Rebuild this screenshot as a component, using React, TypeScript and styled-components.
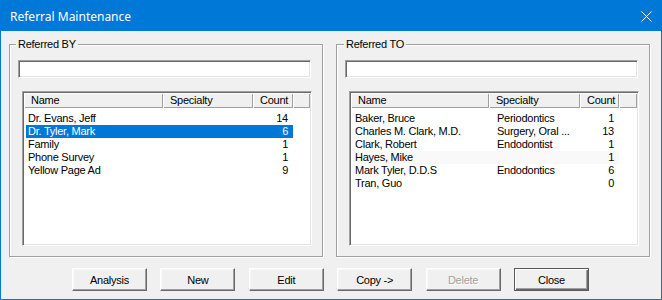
import React from "react";
import styled, { createGlobalStyle, css } from "styled-components";

const GlobalStyle = createGlobalStyle`
  html, body {
    margin: 0;
    padding: 0;
    background: #f0f0f0;
  }
  body {
    font-family: "Liberation Sans", Arial, sans-serif;
    font-size: 11px;
    letter-spacing: -0.25px;
    color: #000;
  }
`;

const Window = styled.div`
  width: 662px;
  height: 300px;
  box-sizing: border-box;
  border: 1px solid #0078d7;
  background: #f0f0f0;
  display: flex;
  flex-direction: column;
  overflow: hidden;
`;

const TitleBar = styled.div`
  height: 30px;
  flex: none;
  background: #0078d7;
  display: flex;
  align-items: center;
  padding: 0 9px;
`;

const Title = styled.span`
  font-family: "Noto Sans", "Liberation Sans", sans-serif;
  font-size: 12px;
  letter-spacing: 0;
  color: #fff;
`;

const CloseGlyph = styled.svg`
  margin-left: auto;
  display: block;
`;

const Client = styled.div`
  display: grid;
  grid-template-columns: 314px 314px;
  column-gap: 13px;
  padding: 13px 0 0 8px;
`;

const GroupBox = styled.div`
  position: relative;
  border: 1px solid #a0a0a0;
  box-shadow: inset 1px 1px 0 #fff, 1px 1px 0 #fff;
  padding: 15px 10px 10px 10px;
  display: flex;
  flex-direction: column;
`;

const GroupCaption = styled.span<{ $left: number }>`
  position: absolute;
  top: -7px;
  left: ${(p) => p.$left}px;
  padding: 0 2px;
  background: #f0f0f0;
  line-height: 13px;
`;

const sunken = css`
  border-style: solid;
  border-width: 1px;
  border-color: #a0a0a0 #fff #fff #a0a0a0;
  box-shadow: inset 1px 1px 0 #696969, inset -1px -1px 0 #e3e3e3;
`;

const TextBox = styled.div`
  ${sunken};
  height: 18px;
  box-sizing: border-box;
  background: #fff;
  margin: 0 1px 0 -2px;
`;

const ListView = styled.div`
  ${sunken};
  height: 155px;
  box-sizing: border-box;
  margin: 13px 0 0 2px;
  padding: 1px;
  background: #fff;
  display: flex;
  flex-direction: column;
`;

const HeaderRow = styled.div`
  display: flex;
  height: 15px;
  flex: none;
`;

const HeaderCell = styled.div<{ $w?: number }>`
  ${(p) => (p.$w ? `width: ${p.$w}px; flex: none;` : "flex: 1;")}
  box-sizing: border-box;
  background: #f0f0f0;
  box-shadow: inset 1px 1px 0 #fff, inset -1px -1px 0 #a0a0a0;
  padding: 0 7px;
  line-height: 15px;
  white-space: nowrap;
  overflow: hidden;
`;

const Rows = styled.div`
  padding: 4px 0 0 2px;
`;

const Row = styled.div<{ $selected?: boolean; $hot?: boolean }>`
  display: flex;
  height: 13px;
  line-height: 13px;
  width: fit-content;
  background: ${(p) => (p.$selected ? "#0078d7" : p.$hot ? "#f9f9f9" : "transparent")};
  color: ${(p) => (p.$selected ? "#fff" : "#000")};
`;

const Cell = styled.div<{ $w: number; $align?: "left" | "right"; $pad: string }>`
  width: ${(p) => p.$w}px;
  flex: none;
  box-sizing: border-box;
  padding: ${(p) => p.$pad};
  text-align: ${(p) => p.$align ?? "left"};
  white-space: nowrap;
  overflow: hidden;
`;

const ButtonBar = styled.div`
  width: 517px;
  margin: 11px 0 0 71px;
  display: flex;
  justify-content: space-between;
`;

const Button = styled.button<{ $default?: boolean }>`
  width: 75px;
  height: 23px;
  box-sizing: border-box;
  padding: 0;
  font-family: "Liberation Sans", Arial, sans-serif;
  font-size: 11px;
  letter-spacing: -0.25px;
  color: #000;
  background: #f0f0f0;
  border-style: solid;
  border-width: 1px;
  border-color: #fff #696969 #696969 #fff;
  box-shadow: inset -1px -1px 0 #a0a0a0, inset 1px 1px 0 #f8f8f8;
  ${(p) =>
    p.$default &&
    css`
      border-color: #5a5a5a;
      box-shadow: inset 1px 1px 0 #fff, inset -1px -1px 0 #696969, inset -2px -2px 0 #a0a0a0;
    `}
  &:disabled {
    color: #a0a0a0;
    text-shadow: 1px 1px 0 #fff;
  }
`;

type Item = { name: string; specialty: string; count: string; selected?: boolean; hot?: boolean };

const referredBy: Item[] = [
  { name: "Dr. Evans, Jeff", specialty: "", count: "14" },
  { name: "Dr. Tyler, Mark", specialty: "", count: "6", selected: true },
  { name: "Family", specialty: "", count: "1" },
  { name: "Phone Survey", specialty: "", count: "1" },
  { name: "Yellow Page Ad", specialty: "", count: "9" },
];

const referredTo: Item[] = [
  { name: "Baker, Bruce", specialty: "Periodontics", count: "1" },
  { name: "Charles M. Clark, M.D.", specialty: "Surgery, Oral ...", count: "13" },
  { name: "Clark, Robert", specialty: "Endodontist", count: "1" },
  { name: "Hayes, Mike", specialty: "", count: "1", hot: true },
  { name: "Mark Tyler, D.D.S", specialty: "Endodontics", count: "6" },
  { name: "Tran, Guo", specialty: "", count: "0" },
];

function Group({
  caption,
  captionLeft,
  cols,
  items,
}: {
  caption: string;
  captionLeft: number;
  cols: [number, number, number];
  items: Item[];
}) {
  return (
    <GroupBox>
      <GroupCaption $left={captionLeft}>{caption}</GroupCaption>
      <TextBox />
      <ListView>
        <HeaderRow>
          <HeaderCell $w={cols[0]}>Name</HeaderCell>
          <HeaderCell $w={cols[1]}>Specialty</HeaderCell>
          <HeaderCell $w={cols[2]}>Count</HeaderCell>
          <HeaderCell />
        </HeaderRow>
        <Rows>
          {items.map((it) => (
            <Row key={it.name} $selected={it.selected} $hot={it.hot}>
              <Cell $w={cols[0] - 2} $pad="0 0 0 2px">
                {it.name}
              </Cell>
              <Cell $w={cols[1]} $pad="0 0 0 8px">
                {it.specialty}
              </Cell>
              <Cell $w={cols[2]} $pad="0 5px 0 0" $align="right">
                {it.count}
              </Cell>
            </Row>
          ))}
        </Rows>
      </ListView>
    </GroupBox>
  );
}

export default function App() {
  return (
    <>
      <GlobalStyle />
      <Window>
        <TitleBar>
          <Title>Referral Maintenance</Title>
          <CloseGlyph width="11" height="11" viewBox="0 0 11 11">
            <path d="M0.5 0.5L10.5 10.5M10.5 0.5L0.5 10.5" stroke="#fff" strokeWidth="1" fill="none" />
          </CloseGlyph>
        </TitleBar>
        <Client>
          <Group caption="Referred BY" captionLeft={6} cols={[139, 90, 40]} items={referredBy} />
          <Group caption="Referred TO" captionLeft={7} cols={[138, 91, 39]} items={referredTo} />
        </Client>
        <ButtonBar>
          <Button>Analysis</Button>
          <Button>New</Button>
          <Button>Edit</Button>
          <Button>Copy -&gt;</Button>
          <Button disabled>Delete</Button>
          <Button $default>Close</Button>
        </ButtonBar>
      </Window>
    </>
  );
}
